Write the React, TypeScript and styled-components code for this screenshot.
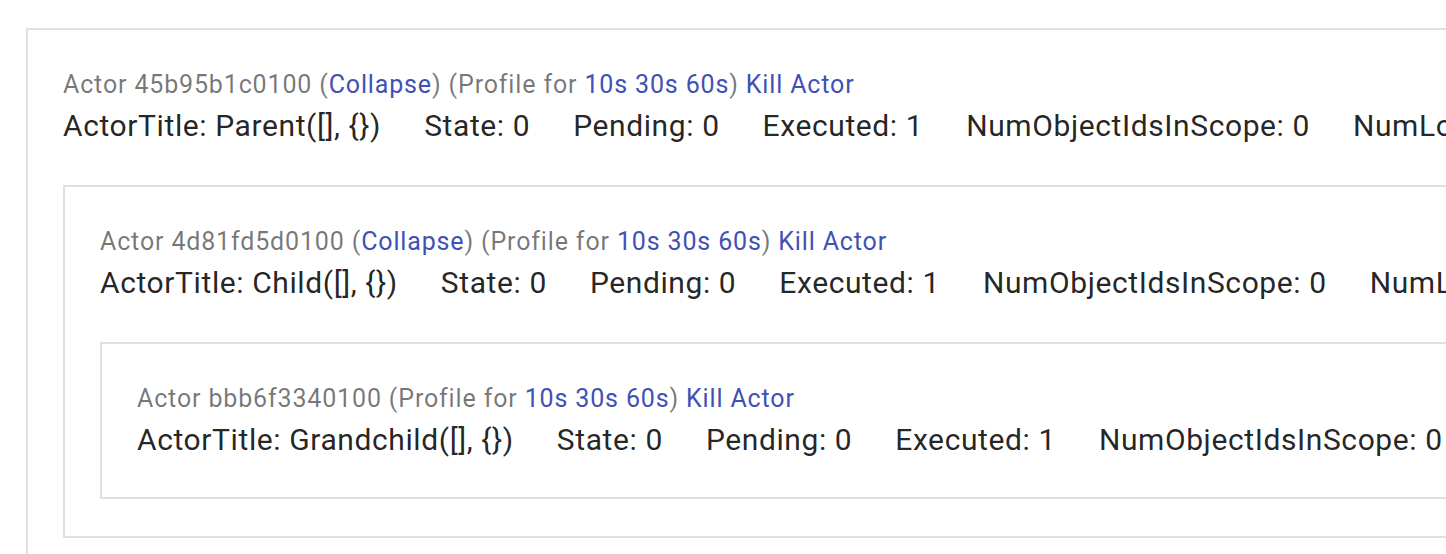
import React from 'react';
import styled, { createGlobalStyle } from 'styled-components';

const GlobalStyle = createGlobalStyle`
  html, body {
    margin: 0;
    padding: 0;
    background: #fff;
    overflow: hidden;
  }
  body {
    font-family: Roboto, "Liberation Sans", sans-serif;
  }
`;

const Page = styled.div`
  padding: 28px 0 0 26px;
`;

const Box = styled.div<{ $nested?: boolean }>`
  border: 2px solid #e0e0e0;
  padding: 37px 35px 37px 35px;
  margin-top: ${p => (p.$nested ? '39px' : '0')};
  width: max-content;
  min-width: 1600px;
  white-space: nowrap;
`;

const Header = styled.div`
  font-size: 25px;
  line-height: 36px;
  letter-spacing: 0.85px;
  color: rgba(0, 0, 0, 0.54);
`;

const Link = styled.a`
  color: #3f51b5;
  text-decoration: none;
  cursor: pointer;
`;

const InfoRow = styled.div`
  display: flex;
  gap: 43px;
  font-size: 30px;
  line-height: 40px;
  letter-spacing: 0.6px;
  color: rgba(0, 0, 0, 0.87);
  margin-top: 3px;
`;

const Info = styled.span``;

interface ActorData {
  id: string;
  title: string;
  collapsible: boolean;
  children?: ActorData[];
}

const data: ActorData = {
  id: '45b95b1c0100',
  title: 'Parent([], {})',
  collapsible: true,
  children: [
    {
      id: '4d81fd5d0100',
      title: 'Child([], {})',
      collapsible: true,
      children: [{ id: 'bbb6f3340100', title: 'Grandchild([], {})', collapsible: false }],
    },
  ],
};

const Actor: React.FC<{ actor: ActorData; nested?: boolean }> = ({ actor, nested }) => (
  <Box $nested={nested}>
    <Header>
      Actor {actor.id}{' '}
      {actor.collapsible && (
        <>
          (<Link>Collapse</Link>){' '}
        </>
      )}
      (Profile for <Link>10s</Link> <Link>30s</Link> <Link>60s</Link>) <Link>Kill Actor</Link>
    </Header>
    <InfoRow>
      <Info>ActorTitle: {actor.title}</Info>
      <Info>State: 0</Info>
      <Info>Pending: 0</Info>
      <Info>Executed: 1</Info>
      <Info>NumObjectIdsInScope: 0</Info>
      <Info>NumLocalObjects: 0</Info>
      <Info>UsedLocalObjectMemory: 0</Info>
    </InfoRow>
    {actor.children?.map(c => (
      <Actor key={c.id} actor={c} nested />
    ))}
  </Box>
);

export default function App() {
  return (
    <Page>
      <GlobalStyle />
      <Actor actor={data} />
    </Page>
  );
}
